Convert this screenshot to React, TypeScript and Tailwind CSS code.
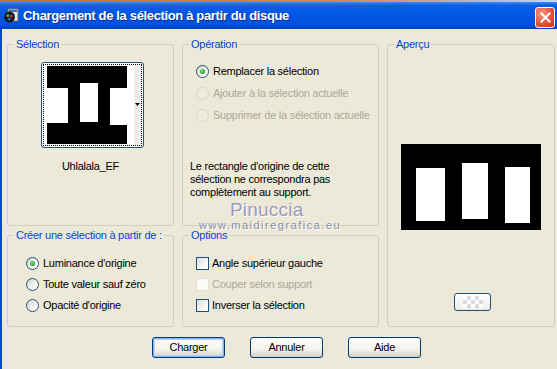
import React from 'react';

const FONT = "font-['Liberation_Sans',Arial,sans-serif]";

function Radio({ checked = false, disabled = false }: { checked?: boolean; disabled?: boolean }) {
  return (
    <span
      className={
        disabled
          ? 'flex h-[13px] w-[13px] shrink-0 items-center justify-center rounded-full border border-[#D8D6C8] bg-[#EEEBDE]'
          : 'flex h-[13px] w-[13px] shrink-0 items-center justify-center rounded-full border border-[#1C5180] bg-[linear-gradient(135deg,#D6D3C6,#FFFFFF_80%)]'
      }
    >
      {checked && (
        <span className="h-[5px] w-[5px] rounded-full bg-[radial-gradient(circle_at_40%_40%,#7BE37B,#21A121_70%)]" />
      )}
    </span>
  );
}

function Check({ disabled = false }: { disabled?: boolean }) {
  return (
    <span
      className={
        disabled
          ? 'h-[13px] w-[13px] shrink-0 border border-[#E2E0D4] bg-[#FBFAF5]'
          : 'h-[13px] w-[13px] shrink-0 border border-[#1C5180] bg-[linear-gradient(135deg,#DCDCD7,#FFFFFF_85%)]'
      }
    />
  );
}

function Group({ title, className, children }: { title: string; className?: string; children: React.ReactNode }) {
  return (
    <fieldset className={`m-0 min-w-0 rounded-[3px] border border-[#D0D0BF] p-0 ${className ?? ''}`}>
      <legend className="ml-[6px] px-[2px] leading-[13px] text-[#0046D5]">{title}</legend>
      {children}
    </fieldset>
  );
}

function XpButton({ label, isDefault = false }: { label: string; isDefault?: boolean }) {
  return (
    <button
      className={`flex h-[21px] w-[73px] items-center justify-center rounded-[3px] border border-[#003C74] bg-[linear-gradient(to_bottom,#FFFFFF,#F3F2EC_60%,#D6D0C5)] text-[11px] leading-none text-black ${
        isDefault ? 'shadow-[inset_0_0_0_1px_#8CB4F2,inset_0_0_0_2px_#B9D1FA]' : ''
      }`}
    >
      {label}
    </button>
  );
}

export default function App() {
  return (
    <div className={`relative flex h-[369px] w-[557px] flex-col overflow-hidden bg-[#ECE9D8] text-[11px] tracking-[-0.25px] whitespace-nowrap text-black ${FONT}`}>
      {/* Barre de titre */}
      <div className="h-[2px] bg-[linear-gradient(to_right,#C2702F,#D3874A_60%,#A9BFE6_90%,#C9D8F2)]" />
      <div className="flex h-[27px] items-center bg-[linear-gradient(to_bottom,#3A8CF6_0%,#0B60E8_12%,#0057E6_45%,#0052DF_80%,#0040CC_100%)] pl-[3px] pr-[2px]">
        <svg width="16" height="16" viewBox="0 0 16 16" className="mt-[1px]">
          <rect x="5" y="1" width="10" height="12" fill="#E8E8E8" stroke="#6A6A6A" />
          <rect x="6" y="2" width="8" height="2" fill="#3A6FC6" />
          <circle cx="6.5" cy="9" r="5.5" fill="#1A1A1A" />
          <circle cx="4.8" cy="7.6" r="1.5" fill="#3FB34A" />
          <circle cx="8.4" cy="8" r="1.3" fill="#D23B3B" />
          <circle cx="6.3" cy="11" r="1.3" fill="#2D6BD8" />
        </svg>
        <span className="ml-[4px] text-[13px] font-bold tracking-[-0.35px] text-white [text-shadow:1px_1px_0_#0A2E8C]">
          Chargement de la sélection à partir du disque
        </span>
        <div className="ml-auto mt-[4px] flex h-[21px] w-[20px] items-center justify-center rounded-[3px] border border-white bg-[radial-gradient(circle_at_30%_30%,#F29A80,#E0553A_55%,#C2351C)]">
          <svg width="11" height="11" viewBox="0 0 11 11">
            <path d="M1.5 1.5 L9.5 9.5 M9.5 1.5 L1.5 9.5" stroke="white" strokeWidth="2" strokeLinecap="square" />
          </svg>
        </div>
      </div>

      {/* Zone client */}
      <div className="flex flex-1 flex-col border-l-2 border-[#0847D8] pl-[5px] pt-[9px]">
        <div className="grid grid-cols-[167px_197px_168px] grid-rows-[188px_98px] gap-x-[8px] gap-y-[3px]">
          <Group title="Sélection" className="h-full">
            <div className="ml-[33px] mt-[11px] h-[86px] w-[103px] rounded-[3px] border border-[#1C5180] bg-white p-[1px]">
              <div className="h-full w-full border border-dotted border-black">
                <svg width="97" height="80" viewBox="0 0 97 80" className="block">
                  <rect width="97" height="80" fill="#FFFFFF" />
                  <rect x="90" y="0" width="7" height="80" fill="#EDEDED" />
                  <rect x="3" y="1" width="80" height="78" fill="#000" />
                  <rect x="0" y="23" width="24" height="35" fill="#FFF" />
                  <rect x="36" y="18" width="18" height="39" fill="#FFF" />
                  <rect x="66" y="23" width="17" height="37" fill="#FFF" />
                  <polygon points="91,38 96,38 93.5,41" fill="#000" />
                </svg>
              </div>
            </div>
            <div className="mt-[12px] text-center leading-[13px]">Uhlalala_EF</div>
          </Group>

          <Group title="Opération" className="h-full">
            <div className="mt-[14px] flex flex-col gap-[9px] pl-[13px]">
              <label className="flex h-[13px] items-center gap-[4px]">
                <Radio checked />
                <span>Remplacer la sélection</span>
              </label>
              <label className="flex h-[13px] items-center gap-[4px] text-[#ACA899]">
                <Radio disabled />
                <span>Ajouter à la sélection actuelle</span>
              </label>
              <label className="flex h-[13px] items-center gap-[4px] text-[#ACA899]">
                <Radio disabled />
                <span>Supprimer de la sélection actuelle</span>
              </label>
            </div>
            <p className="mt-[38px] pl-[7px] leading-[13px]">
              Le rectangle d'origine de cette
              <br />
              sélection ne correspondra pas
              <br />
              complètement au support.
            </p>
          </Group>

          <Group title="Aperçu" className="row-span-2 h-full">
            <div className="flex flex-col items-center">
              <svg width="140" height="86" viewBox="0 0 140 86" className="mt-[93px] block">
                <rect width="140" height="86" fill="#000" />
                <rect x="15" y="24" width="29" height="53" fill="#FFF" />
                <rect x="61" y="19" width="26" height="56" fill="#FFF" />
                <rect x="104" y="23" width="25" height="56" fill="#FFF" />
              </svg>
              <div className="ml-[3px] mt-[63px] flex h-[18px] w-[37px] items-center justify-center rounded-[3px] border border-[#1C5180] bg-[linear-gradient(to_bottom,#FFFFFF,#ECEBE4)]">
                <div className="h-[12px] w-[20px] bg-[repeating-conic-gradient(#DADAE0_0%_25%,#FFFFFF_0%_50%)] bg-[length:8px_8px]" />
              </div>
            </div>
          </Group>

          <Group title="Créer une sélection à partir de :" className="h-full">
            <div className="mt-[15px] flex flex-col gap-[8px] pl-[18px]">
              <label className="flex h-[13px] items-center gap-[4px]">
                <Radio checked />
                <span>Luminance d'origine</span>
              </label>
              <label className="flex h-[13px] items-center gap-[4px]">
                <Radio />
                <span>Toute valeur sauf zéro</span>
              </label>
              <label className="flex h-[13px] items-center gap-[4px]">
                <Radio />
                <span>Opacité d'origine</span>
              </label>
            </div>
          </Group>

          <Group title="Options" className="h-full">
            <div className="mt-[15px] flex flex-col gap-[8px] pl-[13px]">
              <label className="flex h-[13px] items-center gap-[3px]">
                <Check />
                <span>Angle supérieur gauche</span>
              </label>
              <label className="flex h-[13px] items-center gap-[3px] text-[#ACA899]">
                <Check disabled />
                <span>Couper selon support</span>
              </label>
              <label className="flex h-[13px] items-center gap-[3px]">
                <Check />
                <span>Inverser la sélection</span>
              </label>
            </div>
          </Group>
        </div>

        {/* Boutons */}
        <div className="mt-[10px] flex gap-[25px] pl-[145px]">
          <XpButton label="Charger" isDefault />
          <XpButton label="Annuler" />
          <XpButton label="Aide" />
        </div>
      </div>

      {/* Filigrane */}
      <div className="pointer-events-none absolute left-[230px] top-[200px] text-[19px] leading-[19px] tracking-[0.2px] text-[#9A9AC2] [text-shadow:1px_1px_0_#FFFFFF]">
        Pinuccia
      </div>
      <div className="pointer-events-none absolute left-[199px] top-[220px] text-[11px] leading-[11px] tracking-[1.5px] text-[#8C8CAA] [text-shadow:1px_1px_0_#FFFFFF]">
        www.maidiregrafica.eu
      </div>
    </div>
  );
}
